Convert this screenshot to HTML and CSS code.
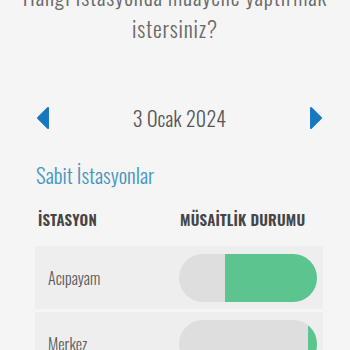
FILE: index.html
```
<!DOCTYPE html>
<html lang="tr">
<head>
<meta charset="utf-8">
<link rel="stylesheet" href="styles.css">
</head>
<body>
<div class="page">
  <h1 class="title">Hangi İstasyonda muayene yaptırmak istersiniz?</h1>
  <div class="datebar">
    <button class="arrow" aria-label="Önceki">
      <svg width="14" height="24" viewBox="0 0 14 24"><path d="M12 2 L2 12 L12 22 Z" fill="#1878be" stroke="#1878be" stroke-width="2" stroke-linejoin="round"/></svg>
    </button>
    <div class="date">3 Ocak 2024</div>
    <button class="arrow" aria-label="Sonraki">
      <svg width="14" height="24" viewBox="0 0 14 24"><path d="M2 2 L12 12 L2 22 Z" fill="#1878be" stroke="#1878be" stroke-width="2" stroke-linejoin="round"/></svg>
    </button>
  </div>
  <h2 class="section-title">Sabit İstasyonlar</h2>
  <div class="thead">
    <div class="th th-name">İSTASYON</div>
    <div class="th">MÜSAİTLİK DURUMU</div>
  </div>
  <div class="rows">
    <div class="row">
      <div class="name">Acıpayam</div>
      <div class="bar"><div class="fill" style="width:66.7%"></div></div>
    </div>
    <div class="row">
      <div class="name">Merkez</div>
      <div class="bar"><div class="fill" style="width:6.5%"></div></div>
    </div>
  </div>
</div>
</body>
</html>
```
FILE: styles.css
```
html,body{margin:0;padding:0;background:#f5f5f5}
body{font-family:"Oswald","Open Sans",sans-serif;font-weight:300;color:#555;overflow:hidden;height:350px}
.page{padding:0}
.title{margin:-20px 0 0;padding:0 10px;font-size:22px;line-height:32px;font-weight:300;color:#6a6a6a;text-align:center;letter-spacing:0.8px}
.datebar{display:flex;align-items:center;justify-content:space-between;margin-top:59px;padding:0 27px 0 36px;height:30px}
.arrow{border:0;background:none;padding:0;margin:0;width:14px;height:24px;display:flex}
.date{font-size:20px;color:#575757;font-weight:300;letter-spacing:0.2px}
.section-title{margin:27px 0 0 36px;font-size:21px;line-height:30px;font-weight:300;color:#4796c2}
.thead{display:flex;margin:17px 0 0;padding:0 0 0 38px;height:24px;align-items:center}
.th{font-size:15px;font-weight:600;color:#454545;letter-spacing:0.2px}
.th-name{width:142px}
.rows{margin:15px 27px 0 35px;display:flex;flex-direction:column;gap:3px}
.row{display:flex;align-items:center;justify-content:space-between;height:63px;background:#eeeeee;padding:0 6px 0 13px}
.name{font-size:16px;color:#5a5a5a;font-weight:300}
.bar{width:138px;height:48px;border-radius:24px;background:#dedede;overflow:hidden;display:flex;justify-content:flex-end}
.fill{height:100%;background:#5cc48f}
```
